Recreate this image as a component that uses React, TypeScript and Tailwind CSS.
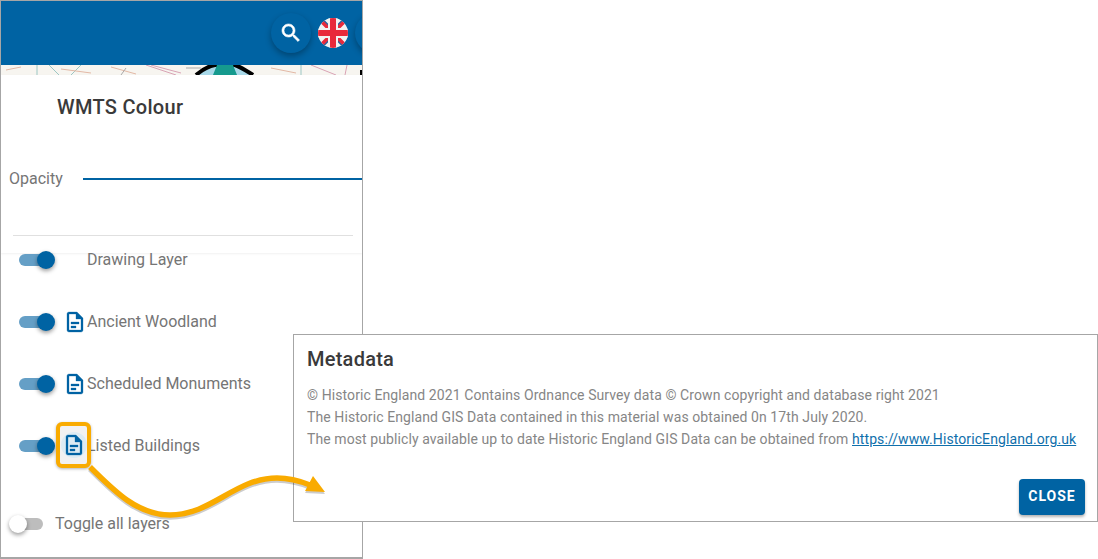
function DocIcon() {
  return (
    <svg viewBox="0 0 24 24" className="h-[24px] w-[24px] shrink-0" fill="#0063a3" stroke="#0063a3" strokeWidth="0.3">
      <path d="M14 2H6c-1.1 0-2 .9-2 2v16c0 1.1.9 2 2 2h12c1.1 0 2-.9 2-2V8l-6-6zm4 18H6V4h7v5h5v11zM8 12h8v2H8v-2zm0 4h5v2H8v-2z" />
    </svg>
  );
}

function SearchIcon() {
  return (
    <svg viewBox="0 0 24 24" className="h-[24px] w-[24px]" fill="#ffffff" stroke="#ffffff" strokeWidth="0.6">
      <path d="M15.5 14h-.79l-.28-.27C15.41 12.59 16 11.11 16 9.5 16 5.91 13.09 3 9.5 3S3 5.91 3 9.5 5.91 16 9.5 16c1.61 0 3.09-.59 4.23-1.57l.27.28v.79l5 4.99L20.49 19l-4.99-5zm-6 0C7.01 14 5 11.99 5 9.5S7.01 5 9.5 5 14 7.01 14 9.5 11.99 14 9.5 14z" />
    </svg>
  );
}

function Toggle({ on = true }: { on?: boolean }) {
  if (!on) {
    return (
      <div className="relative h-[12px] w-[24px] rounded-full bg-[#bdbdbd]">
        <div className="absolute -left-[10px] -top-[3px] h-[18px] w-[18px] rounded-full bg-white shadow-[0_2px_4px_rgba(0,0,0,0.4)]" />
      </div>
    );
  }
  return (
    <div className="relative h-[12px] w-[36px]">
      <div className="h-[12px] w-[32px] rounded-full bg-[#659fc6]" />
      <div className="absolute -top-[3px] left-[18px] h-[18px] w-[18px] rounded-full bg-[#0063a3] shadow-[0_2px_4px_rgba(0,0,0,0.4)]" />
    </div>
  );
}

function LayerRow({ label, icon = true }: { label: string; icon?: boolean }) {
  return (
    <div className="flex h-[62px] items-center pl-[18px]">
      <Toggle />
      <div className="ml-[8px] flex w-[24px] justify-center">{icon && <DocIcon />}</div>
      <span className="text-[16px] text-[#757575]">{label}</span>
    </div>
  );
}

function UkFlag() {
  return (
    <svg viewBox="0 0 30 30" className="h-[30px] w-[30px] shrink-0">
      <defs>
        <clipPath id="flagClip">
          <circle cx="15" cy="15" r="15" />
        </clipPath>
      </defs>
      <g clipPath="url(#flagClip)">
        <rect width="30" height="30" fill="#f2f2f2" />
        <path d="M3 0 L11 8 M19 22 L27 30 M27 0 L19 8 M11 22 L3 30" stroke="#31609c" strokeWidth="2" />
        <path d="M0 0 L30 30 M30 0 L0 30" stroke="#e8293b" strokeWidth="3.5" />
        <rect x="10" width="10" height="30" fill="#f2f2f2" />
        <rect y="10" width="30" height="10" fill="#f2f2f2" />
        <rect x="12" width="6" height="30" fill="#e8293b" />
        <rect y="12" width="30" height="6" fill="#e8293b" />
      </g>
    </svg>
  );
}

export default function App() {
  return (
    <div className="relative h-[559px] w-[1098px] overflow-hidden bg-white font-['Roboto',sans-serif]">
      {/* phone panel */}
      <div className="relative h-[559px] w-[363px] overflow-hidden border-b-2 border-l border-r border-t border-[#a6a6a6]">
        <div className="flex h-[64px] items-center overflow-hidden bg-[#0063a3] pl-[270px] pb-[1px]">
          <div className="flex h-[40px] w-[40px] shrink-0 items-center justify-center rounded-full bg-[#0063a3] shadow-[0_3px_6px_rgba(0,0,0,0.3)]">
            <SearchIcon />
          </div>
          <div className="ml-[7px]">
            <UkFlag />
          </div>
          <div className="ml-[7px] h-[40px] w-[40px] shrink-0 rounded-full bg-[#0063a3] shadow-[0_3px_6px_rgba(0,0,0,0.3)]" />
        </div>
        {/* map strip */}
        <div className="h-[10px] overflow-hidden bg-[#f7f5f0]">
          <svg viewBox="0 0 361 10" className="h-[10px] w-[361px]">
            <path d="M36 0 L36 10 M48 0 L58 10 M300 0 L300 10 M80 0 L70 10" stroke="#9cc7c4" strokeWidth="1" fill="none" />
            <path d="M145 0 L175 10 M150 0 L180 8 M310 0 L335 10 M346 0 L344 10" stroke="#d9a3b5" strokeWidth="1" fill="none" />
            <path d="M5 5 L20 2 M60 4 L90 8 M110 2 L135 9 M270 3 L295 8" stroke="#e3b9a6" strokeWidth="1" fill="none" />
            <path d="M120 10 L125 3 M185 3 L200 3" stroke="#a9a9a9" strokeWidth="1" fill="none" />
            <path d="M195 10 C202 4 208 1 214 0 L234 0 C240 2 246 6 252 10" stroke="#000" strokeWidth="4" fill="#a8d8e8" />
            <path d="M212 10 L216 0 L232 0 L236 10 Z" fill="#159a8e" />
            <path d="M359 5 L361 5 L361 10 L359 10 Z" fill="#000" />
          </svg>
        </div>
        {/* layer header */}
        <div className="h-[178px] shadow-[0_1px_2px_rgba(0,0,0,0.06)]">
          <div className="pl-[56px] pt-[18px] text-[20px] font-medium leading-[28px] tracking-[0.3px] text-[#3a3a3a]">WMTS Colour</div>
          <div className="mt-[47px] flex items-center pl-[8px]">
            <span className="text-[16px] leading-[22px] text-[#757575]">Opacity</span>
            <div className="ml-[20px] h-[2px] flex-1 bg-[#0063a3]" />
          </div>
          <div className="ml-[12px] mr-[9px] mt-[45px] h-px bg-[#e0e0e0]" />
        </div>
        {/* layers */}
        <div className="-mt-[24px]">
          <LayerRow label="Drawing Layer" icon={false} />
          <LayerRow label="Ancient Woodland" />
          <LayerRow label="Scheduled Monuments" />
          <LayerRow label="Listed Buildings" />
        </div>
        <div className="mt-[35px] flex items-center pl-[18px]">
          <Toggle on={false} />
          <span className="ml-[12px] text-[16px] text-[#757575]">Toggle all layers</span>
        </div>
      </div>

      {/* metadata dialog */}
      <div className="absolute left-[293px] top-[334px] flex h-[188px] w-[805px] flex-col border border-[#a6a6a6] bg-white px-[13px]">
        <div className="mt-[11px] text-[20px] font-medium leading-[26px] tracking-[0.25px] text-[#3a3a3a]">Metadata</div>
        <div className="mt-[12px] text-[14px] leading-[22px] tracking-[0.09px] text-[#868686]">
          <p>© Historic England 2021 Contains Ordnance Survey data © Crown copyright and database right 2021</p>
          <p>The Historic England GIS Data contained in this material was obtained 0n 17th July 2020.</p>
          <p>
            The most publicly available up to date Historic England GIS Data can be obtained from{" "}
            <a href="#" className="text-[#0f6fab] underline">https://www.HistoricEngland.org.uk</a>
          </p>
        </div>
        <div className="-mr-px mt-auto mb-[6px] flex justify-end">
          <button className="h-[36px] w-[66px] rounded-[4px] bg-[#0063a3] pb-[2px] text-[14px] font-bold tracking-[1px] text-white shadow-[0_2px_3px_rgba(0,0,0,0.3)]">CLOSE</button>
        </div>
      </div>

      {/* callout highlight and arrow */}
      <div className="absolute left-[56px] top-[422px] flex h-[46px] w-[35px] items-center justify-center rounded-[6px] border-[4px] border-[#f9ab00] bg-[#f1f1f1] shadow-[0_1px_3px_rgba(0,0,0,0.3)]">
        <div className="absolute h-[26px] w-[26px] rounded-full bg-[#dcebf3]" />
        <div className="relative">
          <DocIcon />
        </div>
      </div>
      <svg viewBox="0 0 340 149" className="pointer-events-none absolute left-0 top-[410px] h-[149px] w-[340px]">
        <path d="M90 57 C115 82 138 105 170 105 C212 105 235 68 277 68 C290 68 300 71 310 75" fill="none" stroke="#000" strokeOpacity="0.2" strokeWidth="5.5" transform="translate(0 2)" />
        <path d="M313 66 L325 82 L305 81 Z" fill="#000" fillOpacity="0.2" transform="translate(0 2)" />
        <path d="M90 57 C115 82 138 105 170 105 C212 105 235 68 277 68 C290 68 300 71 310 75" fill="none" stroke="#f9ab00" strokeWidth="5.5" />
        <path d="M313 66 L325 82 L305 81 Z" fill="#f9ab00" />
      </svg>
    </div>
  );
}
